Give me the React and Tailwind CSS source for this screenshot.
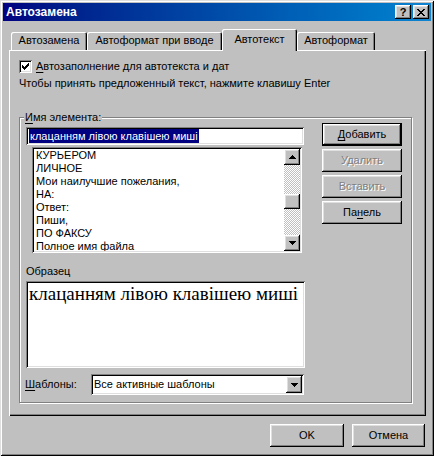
// Autocorrect dialog (classic Windows look), AutoText tab

const raised =
  "shadow-[inset_-1px_-1px_0_#000,inset_1px_1px_0_#fff,inset_-2px_-2px_0_#808080,inset_2px_2px_0_#dfdfdf]";
const sunken =
  "shadow-[inset_1px_1px_0_#808080,inset_-1px_-1px_0_#fff,inset_2px_2px_0_#000,inset_-2px_-2px_0_#dfdfdf]";

function Mn({ children }) {
  return <span className="underline underline-offset-[2px] decoration-1">{children}</span>;
}

function Button({ children, width = "w-[80px]", disabled, isDefault }) {
  if (isDefault) {
    return (
      <div className={`${width} h-[23px] border border-black`}>
        <div className={`h-full w-full flex items-center justify-center bg-[#c0c0c0] ${raised}`}>
          {children}
        </div>
      </div>
    );
  }
  return (
    <div
      className={`${width} h-[23px] flex items-center justify-center bg-[#c0c0c0] ${raised} ${
        disabled ? "text-[#808080] [text-shadow:1px_1px_0_#fff]" : ""
      }`}
    >
      {children}
    </div>
  );
}

function Arrow({ down }) {
  return (
    <svg width="7" height="4" viewBox="0 0 7 4" shapeRendering="crispEdges">
      {down ? <path d="M0 0h7l-3.5 4z" fill="#000" /> : <path d="M0 4h7l-3.5-4z" fill="#000" />}
    </svg>
  );
}

function ScrollBtn({ down }) {
  return (
    <div className={`w-[16px] h-[16px] flex items-center justify-center bg-[#c0c0c0] ${raised}`}>
      <Arrow down={down} />
    </div>
  );
}

const items = [
  "КУРЬЕРОМ",
  "ЛИЧНОЕ",
  "Мои наилучшие пожелания,",
  "НА:",
  "Ответ:",
  "Пиши,",
  "ПО ФАКСУ",
  "Полное имя файла",
];

function Tab({ children, width, active }) {
  if (active) {
    return (
      <div
        className={`${width} h-[22px] self-start relative z-10 bg-[#c0c0c0] flex justify-center pt-[4px] rounded-t-[2px] shadow-[inset_1px_1px_0_#fff,inset_-1px_0_0_#000,inset_-2px_0_0_#808080]`}
      >
        {children}
      </div>
    );
  }
  return (
    <div
      className={`${width} h-[18px] bg-[#c0c0c0] flex justify-center pt-[2px] rounded-t-[2px] shadow-[inset_1px_1px_0_#fff,inset_-1px_0_0_#000,inset_-2px_0_0_#808080]`}
    >
      {children}
    </div>
  );
}

export default function App() {
  return (
    <div className="w-[434px] h-[456px] bg-[#c0c0c0] p-[3px] flex flex-col text-[11px] leading-[13px] text-black font-['Liberation_Sans',Arial,sans-serif] shadow-[inset_1px_1px_0_#dfdfdf,inset_-1px_-1px_0_#000,inset_2px_2px_0_#fff,inset_-2px_-2px_0_#808080]">
      {/* title bar */}
      <div className="h-[18px] flex items-center bg-linear-to-r from-[#000080] to-[#1084d0] pl-[3px] pr-[2px]">
        <span className="text-white font-bold text-[12px] flex-1">Автозамена</span>
        <div className={`w-[16px] h-[14px] flex items-center justify-center bg-[#c0c0c0] ${raised}`}>
          <span className="font-bold text-[11px] leading-none mt-[1px]">?</span>
        </div>
        <div className={`ml-[2px] w-[16px] h-[14px] flex items-center justify-center bg-[#c0c0c0] ${raised}`}>
          <svg width="8" height="7" viewBox="0 0 8 7" shapeRendering="crispEdges">
            <path d="M0 0h2v1h-2zM6 0h2v1h-2zM1 1h2v1h-2zM5 1h2v1h-2zM2 2h4v1h-4zM3 3h2v1h-2zM2 4h4v1h-4zM1 5h2v1h-2zM5 5h2v1h-2zM0 6h2v1h-2zM6 6h2v1h-2z" fill="#000" />
          </svg>
        </div>
      </div>

      {/* tabs */}
      <div className="mt-[8px] ml-[8px] h-[21px] flex items-end">
        <Tab width="w-[76px]">Автозамена</Tab>
        <Tab width="w-[135px]">Автоформат при вводе</Tab>
        <Tab width="w-[75px]" active>
          Автотекст
        </Tab>
        <Tab width="w-[78px]">Автоформат</Tab>
      </div>

      {/* panel */}
      <div className="ml-[6px] w-[417px] h-[366px] flex flex-col shadow-[inset_1px_1px_0_#fff,inset_-1px_-1px_0_#000,inset_-2px_-2px_0_#808080]">
        <div className="mt-[10px] ml-[10px] h-[13px] flex items-center gap-[4px]">
          <div className={`w-[13px] h-[13px] bg-white flex items-center justify-center ${sunken}`}>
            <svg width="7" height="7" viewBox="0 0 7 7" shapeRendering="crispEdges">
              <path d="M6 0h1v3h-1v1h-1v1h-1v1h-1v1h-1v-1h-1v-1h-1v-1h-1v-3h1v1h1v1h1v1h1v-1h1v-1h1z" fill="#000" />
            </svg>
          </div>
          <span>
            <Mn>А</Mn>втозаполнение для автотекста и дат
          </span>
        </div>
        <div className="mt-[4px] ml-[10px]">Чтобы принять предложенный текст, нажмите клавишу Enter</div>

        {/* group box */}
        <div className="relative mt-[27px] ml-[10px] w-[393px] h-[286px] border border-[#808080] shadow-[inset_1px_1px_0_#fff,1px_1px_0_#fff] pt-[5px] pl-[6px] flex items-start">
          <span className="absolute -top-[7px] left-[4px] px-[1px] bg-[#c0c0c0]">
            <Mn>И</Mn>мя элемента:
          </span>

          <div className="mt-[4px] flex flex-col">
            <div className={`w-[278px] h-[18px] bg-white p-[2px] flex items-center ${sunken}`}>
              <span className="ml-[1px] bg-[#000080] text-white px-[1px] h-[14px] leading-[14px]">
                клацанням лівою клавішею миші
              </span>
            </div>
            <div className={`mt-[2px] ml-[6px] w-[270px] h-[106px] bg-white p-[2px] flex ${sunken}`}>
              <div className="flex-1 overflow-hidden pl-[2px]">
                {items.map((t) => (
                  <div key={t} className="h-[13px] whitespace-nowrap">
                    {t}
                  </div>
                ))}
              </div>
              <div className="w-[16px] flex flex-col">
                <ScrollBtn />
                <div className="flex-1 bg-[conic-gradient(#fff_25%,#c0c0c0_0_50%,#fff_0_75%,#c0c0c0_0)] bg-[length:2px_2px]">
                  <div className={`mt-[29px] w-[16px] h-[15px] bg-[#c0c0c0] ${raised}`} />
                </div>
                <ScrollBtn down />
              </div>
            </div>

            <div className="mt-[12px] h-[13px]">Образец</div>
            <div className={`mt-[3px] w-[279px] h-[87px] bg-white pl-[3px] pt-[3px] ${sunken}`}>
              <span className="font-['Liberation_Serif','Times_New_Roman',serif] text-[19px] leading-[20px]">
                клацанням лівою клавішею миші
              </span>
            </div>

            <div className="mt-[6px] flex items-center">
              <span className="w-[66px] -ml-[1px]">
                <Mn>Ш</Mn>аблоны:
              </span>
              <div className={`w-[213px] h-[21px] bg-white p-[2px] flex items-center ${sunken}`}>
                <span className="flex-1 pl-[1px]">Все активные шаблоны</span>
                <div className={`w-[16px] h-[17px] flex items-center justify-center bg-[#c0c0c0] ${raised}`}>
                  <Arrow down />
                </div>
              </div>
            </div>
          </div>

          <div className="ml-[17px] flex flex-col gap-[3px]">
            <Button isDefault>
              <span>
                <Mn>Д</Mn>обавить
              </span>
            </Button>
            <Button disabled>Удалить</Button>
            <Button disabled>Вставить</Button>
            <Button>
              <span>
                Па<Mn>н</Mn>ель
              </span>
            </Button>
          </div>
        </div>
      </div>

      {/* footer */}
      <div className="mt-[8px] ml-[267px] flex gap-[8px]">
        <Button width="w-[74px]">OK</Button>
        <Button width="w-[73px]">Отмена</Button>
      </div>
    </div>
  );
}
